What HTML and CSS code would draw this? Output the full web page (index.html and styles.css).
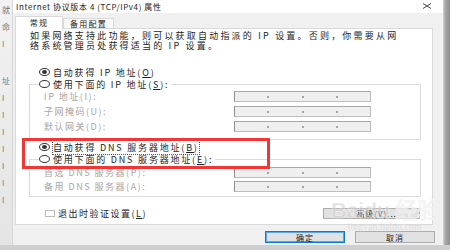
FILE: index.html
```html
<!DOCTYPE html>
<html lang="zh-CN">
<head>
    <meta charset="UTF-8">
    <title>Internet 协议版本 4 (TCP/IPv4) 属性</title>
    <link rel="stylesheet" href="styles.css">
</head>
<body>
    <div class="screen">
        <!-- window behind the dialog -->
        <div class="behind">
            <span>就</span>
            <span>命</span>
            <span>I</span>
            <span class="gap">址</span>
            <span>I</span>
            <span>I</span>
            <span>I</span>
            <span>I</span>
            <span>I</span>
            <span>I</span>
            <span>I</span>
        </div>

        <div class="dialog">
            <div class="titlebar">
                <span class="title">Internet 协议版本 4 (TCP/IPv4) 属性</span>
                <svg class="close" width="10" height="6" viewBox="0 0 10 6">
                    <path d="M1 0.5 L9 5.5 M9 0.5 L1 5.5" stroke="#333" stroke-width="0.9" fill="none"/>
                </svg>
            </div>

            <div class="body">
                <div class="tabs">
                    <div class="tab active">常规</div>
                    <div class="tab">备用配置</div>
                </div>

                <div class="panel">
                    <p class="desc">如果网络支持此功能，则可以获取自动指派的 IP 设置。否则，你需要从网<br>络系统管理员处获得适当的 IP 设置。</p>

                    <div class="radio-row first">
                        <span class="radio checked"></span>
                        <span>自动获得 IP 地址(<u>O</u>)</span>
                    </div>

                    <div class="group ip">
                        <div class="radio-row legend">
                            <span class="radio"></span>
                            <span>使用下面的 IP 地址(<u>S</u>):</span>
                        </div>
                        <div class="field">
                            <span class="label">IP 地址(I):</span>
                            <span class="ipbox"><i></i><i></i><i></i></span>
                        </div>
                        <div class="field">
                            <span class="label">子网掩码(U):</span>
                            <span class="ipbox"><i></i><i></i><i></i></span>
                        </div>
                        <div class="field">
                            <span class="label">默认网关(D):</span>
                            <span class="ipbox"><i></i><i></i><i></i></span>
                        </div>
                    </div>

                    <div class="radio-row dns-auto">
                        <span class="radio checked"></span>
                        <span class="focus">自动获得 DNS 服务器地址(<u>B</u>)</span>
                    </div>

                    <div class="group dns">
                        <div class="radio-row legend">
                            <span class="radio"></span>
                            <span>使用下面的 DNS 服务器地址(<u>E</u>):</span>
                        </div>
                        <div class="field">
                            <span class="label">首选 DNS 服务器(P):</span>
                            <span class="ipbox"><i></i><i></i><i></i></span>
                        </div>
                        <div class="field">
                            <span class="label">备用 DNS 服务器(A):</span>
                            <span class="ipbox"><i></i><i></i><i></i></span>
                        </div>
                    </div>

                    <div class="bottom-row">
                        <label class="check">
                            <span class="box"></span>
                            <span>退出时验证设置(<u>L</u>)</span>
                        </label>
                        <button class="btn advanced">高级(V)...</button>
                    </div>

                    <div class="highlight"></div>
                </div>

                <div class="actions">
                    <button class="btn primary">确定</button>
                    <button class="btn">取消</button>
                </div>

                <div class="watermark">
                    <span class="wm-logo">Bai<b>du</b> 经验</span>
                    <span class="wm-url">jingyan.baidu.com</span>
                </div>
            </div>
        </div>

        <div class="edge"></div>
    </div>
</body>
</html>
```

FILE: styles.css
```css
/* Basic Reset */
* {
    margin: 0;
    padding: 0;
    box-sizing: border-box;
}

body {
    width: 450px;
    height: 250px;
    overflow: hidden;
    background-color: #cfcfcf;
    font-family: "Noto Sans CJK SC", "DejaVu Sans", sans-serif;
    font-size: 9px;
    color: #1e1e1e;
}

.screen {
    display: flex;
    height: 245px;
}

/* Window behind */
.behind {
    width: 13px;
    display: flex;
    flex-direction: column;
    gap: 1px;
    padding-top: 6px;
    background: linear-gradient(#f2f2f2, #e4e4e4);
    border-right: 1px solid #d6d6d6;
    color: #777;
    font-size: 8px;
    line-height: 8px;
    overflow: hidden;
}

.behind span {
    display: block;
    padding-left: 2px;
    margin-bottom: 8px;
}

.behind .gap {
    margin-top: 20px;
}

.edge {
    width: 7px;
    background: linear-gradient(90deg, #d8d8d8 0, #a9a9a9 2px, #8e8e8e 100%);
}

/* Dialog */
.dialog {
    width: 430px;
    display: flex;
    flex-direction: column;
    background-color: #f0f0f0;
}

.titlebar {
    height: 13px;
    background-color: #fff;
    display: flex;
    align-items: center;
    justify-content: space-between;
    padding: 0 11px 1px 3px;
}

.title {
    font-size: 8px;
    letter-spacing: 0.6px;
    color: #222;
}

.body {
    position: relative;
    flex: 1;
    padding: 4px 10px 0 2px;
}

/* Tabs */
.tabs {
    display: flex;
    align-items: flex-end;
    height: 11px;
}

.tab {
    height: 10px;
    line-height: 9px;
    padding: 0 4px;
    width: 51px;
    text-align: center;
    font-size: 8px;
    letter-spacing: 1.3px;
    border: 1px solid #d9d9d9;
    border-bottom: none;
    background-color: #fafafa;
}

.tab.active {
    width: 48px;
    height: 13px;
    line-height: 12px;
    margin-bottom: -1px;
    background-color: #fff;
    position: relative;
    z-index: 1;
}

.panel {
    position: relative;
    height: 197px;
    background-color: #fff;
    border: 1px solid #d9d9d9;
    padding: 2px 11px 0 13px;
}

.desc {
    margin-left: 1px;
    line-height: 10px;
    letter-spacing: 2.2px;
    white-space: nowrap;
}

.radio-row {
    display: flex;
    align-items: center;
    height: 10px;
    gap: 3px;
    letter-spacing: 1.8px;
    white-space: nowrap;
}

.radio-row.first {
    margin: 16px 0 0 10px;
}

.radio {
    width: 11px;
    height: 8px;
    border: 1px solid #333;
    border-radius: 50%;
    position: relative;
    flex-shrink: 0;
}

.radio.checked::after {
    content: "";
    position: absolute;
    left: 2px;
    top: 1px;
    width: 5px;
    height: 4px;
    border-radius: 50%;
    background-color: #333;
}

.focus {
    outline: 1px dotted #555;
    outline-offset: 0;
}

/* Group boxes */
.group {
    border: 1px solid #dcdcdc;
}

.group.ip {
    margin-top: 7px;
    height: 56px;
}

.group.dns {
    margin-top: 7px;
    height: 38px;
}

.legend {
    margin: -6px 0 0 9px;
    padding-right: 2px;
    background-color: #fff;
    width: max-content;
}

.field {
    display: flex;
    align-items: center;
    justify-content: space-between;
    height: 11px;
    margin-top: 4px;
    padding: 0 49px 0 14px;
    color: #a6a6a6;
    letter-spacing: 1.5px;
}

.ip .field:nth-child(2) {
    margin-top: 2px;
}

.dns .field {
    margin-top: 3px;
}

.ipbox {
    width: 137px;
    height: 11px;
    display: flex;
    justify-content: space-evenly;
    align-items: center;
    background-color: #efefef;
    border: 1px solid #bdbdbd;
    border-left-color: #8c8c8c;
    border-top-color: #a9a9a9;
}

.ipbox i {
    width: 2px;
    height: 2px;
    background-color: #a5a5a5;
}

.radio-row.dns-auto {
    margin: 2px 0 0 10px;
}

/* Bottom row */
.bottom-row {
    display: flex;
    justify-content: space-between;
    align-items: center;
    margin-top: 10px;
}

.check {
    display: flex;
    align-items: center;
    gap: 3px;
    margin-left: 16px;
    letter-spacing: 1.5px;
}

.check .box {
    width: 10px;
    height: 7px;
    border: 1px solid #bbb;
    background-color: #fff;
}

.btn {
    font-family: inherit;
    font-size: 8px;
    color: #222;
    height: 11px;
    line-height: 9px;
    background-color: #e1e1e1;
    border: 1px solid #adadad;
    letter-spacing: 1px;
}

.advanced {
    width: 97px;
    padding-left: 10px;
    margin-right: 1px;
}

.highlight {
    position: absolute;
    left: 6px;
    top: 109px;
    width: 248px;
    height: 31px;
    border: 3px solid #f23535;
}

/* OK / Cancel */
.actions {
    display: flex;
    justify-content: flex-end;
    gap: 10px;
    margin-top: 6px;
    margin-right: -2px;
}

.actions .btn {
    width: 80px;
    height: 12px;
}

.btn.primary {
    border: 1px solid #0a78d7;
    box-shadow: inset 0 0 0 1px #5aa7ea;
}

/* Watermark */
.watermark {
    position: absolute;
    left: 318px;
    top: 187px;
    display: flex;
    flex-direction: column;
    align-items: center;
    color: rgba(200, 200, 200, 0.5);
    pointer-events: none;
}

.wm-logo {
    font-family: "Liberation Sans", sans-serif;
    font-size: 22px;
    font-weight: bold;
    line-height: 22px;
    letter-spacing: -0.5px;
    -webkit-text-stroke: 0.6px rgba(255, 255, 255, 0.6);
}

.wm-logo b {
    font-weight: bold;
}

.wm-url {
    font-family: "Liberation Serif", serif;
    font-size: 10px;
    margin-top: -1px;
}
```
